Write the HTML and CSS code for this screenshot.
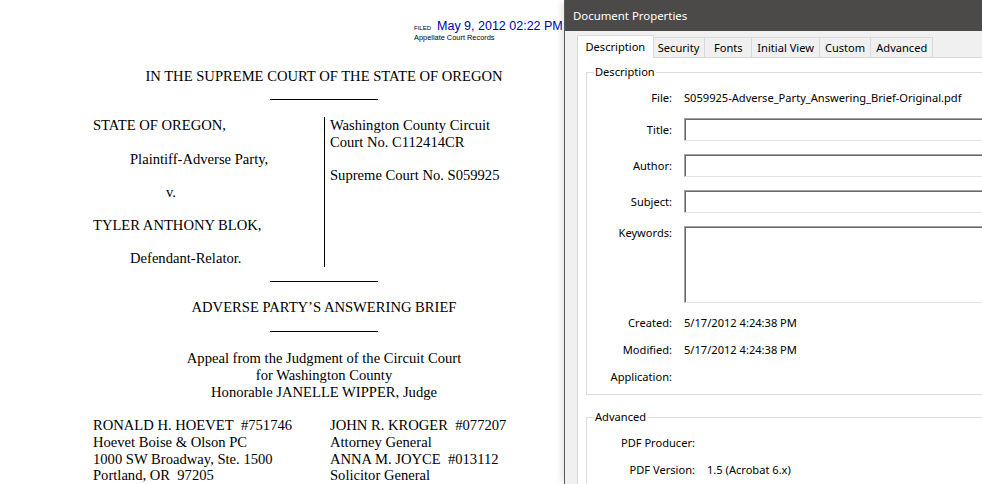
FILE: index.html
```html
<!DOCTYPE html>
<html lang="en">
<head>
    <meta charset="UTF-8">
    <title>Document Properties</title>
    <link rel="stylesheet" href="styles.css">
</head>
<body>
<div class="screen">
    <div class="page">
        <div class="stamp">
            <div class="stamp-line"><span class="filed">FILED</span><span class="filed-date">May 9, 2012 02:22 PM</span></div>
            <div class="stamp-sub">Appellate Court Records</div>
        </div>
        <div class="court">IN THE SUPREME COURT OF THE STATE OF OREGON</div>
        <div class="rule"></div>
        <div class="caption">
            <div class="parties">
                <p>STATE OF OREGON,</p>
                <p class="indent">Plaintiff-Adverse Party,</p>
                <p class="indent-v">v.</p>
                <p>TYLER ANTHONY BLOK,</p>
                <p class="indent">Defendant-Relator.</p>
            </div>
            <div class="case-no">
                <p>Washington County Circuit<br>Court No. C112414CR</p>
                <p>Supreme Court No. S059925</p>
            </div>
        </div>
        <div class="rule rule-caption"></div>
        <div class="brief-title">ADVERSE PARTY&rsquo;S ANSWERING BRIEF</div>
        <div class="rule rule-brief"></div>
        <div class="appeal">
            Appeal from the Judgment of the Circuit Court<br>
            for Washington County<br>
            Honorable JANELLE WIPPER, Judge
        </div>
        <div class="counsel">
            <p>RONALD H. HOEVET&nbsp; #751746<br>Hoevet Boise &amp; Olson PC<br>1000 SW Broadway, Ste. 1500<br>Portland, OR&nbsp; 97205</p>
            <p>JOHN R. KROGER&nbsp; #077207<br>Attorney General<br>ANNA M. JOYCE&nbsp; #013112<br>Solicitor General</p>
        </div>
    </div>

    <div class="dialog">
        <div class="titlebar">Document Properties</div>
        <div class="dialog-body">
            <div class="tabs">
                <div class="tab active">Description</div>
                <div class="tab">Security</div>
                <div class="tab">Fonts</div>
                <div class="tab">Initial View</div>
                <div class="tab">Custom</div>
                <div class="tab">Advanced</div>
            </div>
            <div class="panel">
                <fieldset class="group">
                    <legend>Description</legend>
                    <div class="fields">
                        <div class="label">File:</div>
                        <div class="value">S059925-Adverse_Party_Answering_Brief-Original.pdf</div>
                        <div class="label">Title:</div>
                        <input class="field" type="text">
                        <div class="label">Author:</div>
                        <input class="field" type="text">
                        <div class="label">Subject:</div>
                        <input class="field" type="text">
                        <div class="label label-top">Keywords:</div>
                        <textarea class="field tall"></textarea>
                        <div class="label">Created:</div>
                        <div class="value">5/17/2012 4:24:38 PM</div>
                        <div class="label">Modified:</div>
                        <div class="value">5/17/2012 4:24:38 PM</div>
                        <div class="label">Application:</div>
                        <div class="value"></div>
                    </div>
                </fieldset>
                <fieldset class="group group-advanced">
                    <legend>Advanced</legend>
                    <div class="fields fields-wide">
                        <div class="label">PDF Producer:</div>
                        <div class="value"></div>
                        <div class="label">PDF Version:</div>
                        <div class="value">1.5 (Acrobat 6.x)</div>
                    </div>
                </fieldset>
            </div>
        </div>
    </div>
</div>
</body>
</html>
```

FILE: styles.css
```css
body {
    margin: 0;
    overflow: hidden;
    background: #fff;
}
.screen {
    display: flex;
    width: 1100px;
    height: 484px;
    overflow: hidden;
}

/* pdf page */
.page {
    flex: none;
    width: 564px;
    box-sizing: border-box;
    padding: 0 9px 0 93px;
    font-family: "Liberation Serif", "Times New Roman", serif;
    font-size: 14.6px;
    line-height: 16.6px;
    color: #000;
    background: #fff;
}
.page p { margin: 0; }
.stamp {
    margin: 18px 0 0 321px;
    white-space: nowrap;
    font-family: "Liberation Sans", Arial, sans-serif;
}
.stamp-line { line-height: 14px; }
.filed {
    font-size: 6px;
    margin-right: 6px;
}
.filed-date {
    font-size: 12.5px;
    color: #0000a8;
}
.stamp-sub {
    font-size: 7.4px;
    line-height: 8px;
    margin-top: -1px;
}
.court {
    margin-top: 25.7px;
    text-align: center;
}
.rule {
    width: 108px;
    height: 1px;
    background: #000;
    margin: 15.2px auto 0;
}
.rule-caption { margin-top: 14px; }
.rule-brief { margin-top: 16px; }
.caption {
    display: grid;
    grid-template-columns: 232px 1fr;
    margin-top: 17px;
}
.parties { border-right: 1px solid #000; }
.parties p + p,
.case-no p + p { margin-top: 16.6px; }
.indent { padding-left: 37px; }
.indent-v { padding-left: 73px; }
.case-no { padding-left: 5px; }
.brief-title {
    margin-top: 16.8px;
    text-align: center;
}
.appeal {
    margin-top: 18.2px;
    text-align: center;
}
.counsel {
    display: grid;
    grid-template-columns: 237px 1fr;
    margin-top: 17.2px;
    white-space: nowrap;
}

/* properties dialog */
.dialog {
    flex: none;
    width: 536px;
    display: flex;
    flex-direction: column;
    border-left: 1px solid #5b5b5b;
    background: #f0f0f0;
    box-shadow: -5px 0 6px -2px rgba(0, 0, 0, 0.1);
    font-family: "Noto Sans", "Open Sans", sans-serif;
    font-size: 11.1px;
    color: #000;
}
.titlebar {
    height: 31px;
    line-height: 31px;
    padding-left: 8px;
    background: #4c4a48;
    color: #fff;
    font-size: 11.4px;
}
.dialog-body {
    flex: 1;
    display: flex;
    flex-direction: column;
    padding: 4px 0 0 12px;
}
.tabs {
    display: flex;
    align-items: flex-end;
    height: 22px;
    padding-left: 2px;
}
.tab {
    height: 20px;
    line-height: 19px;
    min-width: 48px;
    box-sizing: border-box;
    padding: 0 5px;
    text-align: center;
    background: #f0f0f0;
    border: 1px solid #d9d9d9;
    border-bottom: none;
    margin-left: -1px;
}
.tab.active {
    position: relative;
    z-index: 1;
    height: 23px;
    line-height: 21px;
    margin: 0 -2px -1px -2px;
    padding: 0 7.5px;
    background: #fff;
}
.tab.active + .tab { margin-left: 0; }
.panel {
    flex: 1;
    background: #fff;
    border-top: 1px solid #d9d9d9;
    border-left: 1px solid #d9d9d9;
    padding: 6px 0 0 8px;
}
.group {
    margin: 0;
    padding: 0 0 10px;
    border: 1px solid #dcdcdc;
    min-width: 0;
}
.group legend {
    margin-left: 7px;
    padding: 0 1px;
    line-height: 16px;
}
.group-advanced { margin-top: 14px; }
.fields {
    display: grid;
    grid-template-columns: 85px 1fr;
    column-gap: 12px;
    row-gap: 13px;
    align-items: center;
    padding-top: 11px;
}
.fields-wide { grid-template-columns: 108px 1fr; }
.label {
    text-align: right;
    line-height: 14px;
    white-space: nowrap;
}
.label-top { align-self: start; }
.value {
    line-height: 14px;
    min-height: 14px;
    white-space: nowrap;
}
.field {
    display: block;
    width: 100%;
    height: 23px;
    box-sizing: border-box;
    margin: 0;
    padding: 0;
    background: #fff;
    border: 1px solid #e3e3e3;
    border-top-color: #a0a0a0;
    border-left-color: #a0a0a0;
    box-shadow: inset 1px 1px 0 #696969;
    outline: none;
    font: inherit;
}
.field.tall {
    height: 77px;
    resize: none;
}
```
